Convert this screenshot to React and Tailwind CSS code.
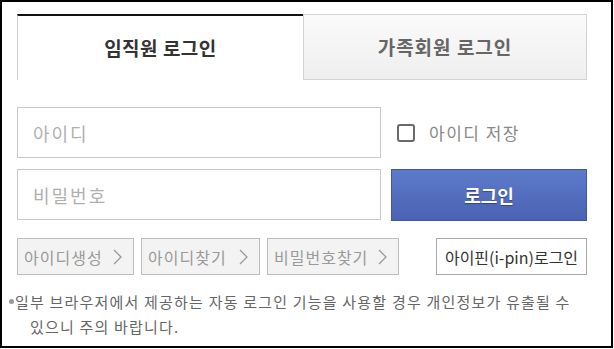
import React from 'react';

const font = { fontFamily: '"Noto Sans CJK KR", "Noto Sans", sans-serif' };

function Chevron() {
  return (
    <svg width="9" height="16" viewBox="0 0 9 16" className="shrink-0">
      <polyline points="1,1 8,8 1,15" fill="none" stroke="#999" strokeWidth="1.3" />
    </svg>
  );
}

function LinkButton({ label, width }) {
  return (
    <button className={`h-[37px] ${width} flex items-center justify-between pl-[6px] pr-[11px] bg-[#f3f3f3] border border-[#bdbdbd] text-[16px] text-[#9a9a9a] tracking-[1px]`}>
      <span>{label}</span>
      <Chevron />
    </button>
  );
}

export default function App() {
  return (
    <div className="w-[613px] h-[348px] border-2 border-black bg-white px-[15px] pt-[12px]" style={font}>
      {/* 탭 */}
      <div className="flex w-[570px] h-[66px]">
        <div className="w-[286px] border-t-2 border-t-[#111] border-l border-l-[#d0d0d0] flex items-center justify-center text-[19px] font-bold text-[#333] tracking-[0.5px]">
          임직원 로그인
        </div>
        <div className="flex-1 border border-[#d4d4d4] bg-gradient-to-b from-[#fafafa] to-[#efefef] flex items-center justify-center text-[19px] font-bold text-[#666] tracking-[1px]">
          가족회원 로그인
        </div>
      </div>

      {/* 입력 */}
      <div className="flex mt-[27px] w-[570px]">
        <div className="flex flex-col gap-[11px] w-[364px]">
          <input
            className="h-[51px] border border-[#c8c8c8] px-[15px] text-[18px] tracking-[2px] text-[#333] placeholder:text-[#b0b0b0] outline-none"
            placeholder="아이디"
          />
          <input
            type="password"
            className="h-[51px] border border-[#c8c8c8] px-[15px] text-[18px] tracking-[2px] text-[#333] placeholder:text-[#b0b0b0] outline-none"
            placeholder="비밀번호"
          />
        </div>
        <div className="flex flex-col ml-[10px] w-[196px]">
          <label className="h-[51px] flex items-center gap-[14px] pl-[6px]">
            <span className="w-[18px] h-[18px] border-2 border-[#6a6a6a] rounded-[3px] bg-white"></span>
            <span className="text-[17px] text-[#888] tracking-[1.5px]">아이디 저장</span>
          </label>
          <button className="mt-[11px] h-[52px] border border-[#4257a3] bg-gradient-to-b from-[#5d7bcb] to-[#4a62b1] text-white text-[18px] font-bold [text-shadow:0_1px_1px_rgba(0,0,0,0.35)]">
            로그인
          </button>
        </div>
      </div>

      {/* 하단 버튼 */}
      <div className="flex items-center mt-[17px] w-[570px]">
        <div className="flex gap-[7px]">
          <LinkButton label="아이디생성" width="w-[117px]" />
          <LinkButton label="아이디찾기" width="w-[119px]" />
          <LinkButton label="비밀번호찾기" width="w-[132px]" />
        </div>
        <button className="ml-auto h-[37px] w-[151px] border border-[#a8a8a8] bg-white text-[16px] text-[#333]">
          아이핀(i-pin)로그인
        </button>
      </div>

      {/* 안내 */}
      <div className="mt-[14px] -ml-[8px] flex text-[15px] leading-[25px] text-[#666] tracking-[1.2px]">
        <span className="w-[6px] h-[25px] shrink-0 flex items-center">
          <span className="w-[5px] h-[5px] rounded-full bg-[#999]"></span>
        </span>
        <p>
          일부 브라우저에서 제공하는 자동 로그인 기능을 사용할 경우 개인정보가 유출될 수
          <br />
          <span className="pl-[15px]">있으니 주의 바랍니다.</span>
        </p>
      </div>
    </div>
  );
}
